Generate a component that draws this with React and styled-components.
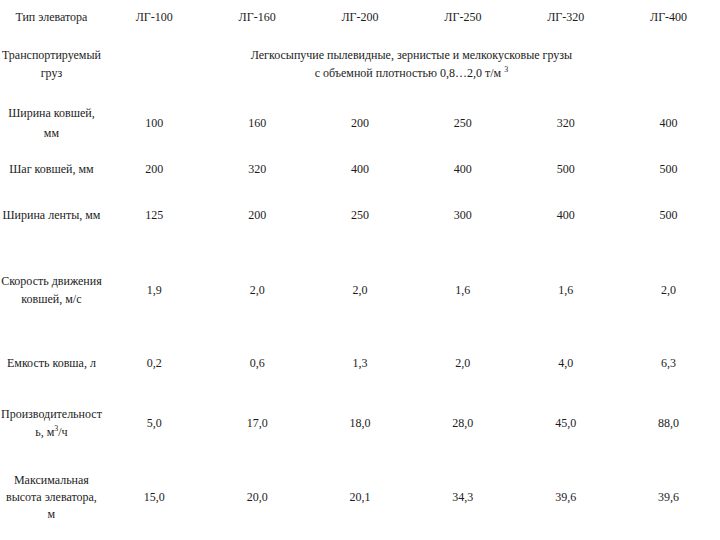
import React from "react";
import styled, { createGlobalStyle } from "styled-components";

const Global = createGlobalStyle`
  html, body { margin: 0; padding: 0; background: #ffffff; }
  body { font-family: "Liberation Serif", "Times New Roman", serif; color: #1c1c1c; }
`;

const Grid = styled.div`
  width: 720px;
  display: grid;
  grid-template-columns: repeat(7, minmax(0, 1fr));
  grid-template-rows: 34px 60px 58px 34px 58px 92px 54px 66px 82px;
  font-size: 12px;
  line-height: 17px;
`;

const Cell = styled.div`
  display: flex;
  align-items: center;
  justify-content: center;
  text-align: center;
  grid-column: ${(p) => (p.$span ? `span ${p.$span}` : "auto")};
  padding: 0 1px;
`;

const Text = styled.span`
  display: block;
  white-space: nowrap;
  line-height: ${(p) => p.$lh || 17}px;
`;

const Sup = styled.sup`
  font-size: 8px;
  line-height: 0;
`;

const headers = ["ЛГ-100", "ЛГ-160", "ЛГ-200", "ЛГ-250", "ЛГ-320", "ЛГ-400"];

const rows = [
  { label: <>Ширина ковшей,<br />мм</>, lh: 20, vals: ["100", "160", "200", "250", "320", "400"] },
  { label: "Шаг ковшей, мм", vals: ["200", "320", "400", "400", "500", "500"] },
  { label: "Ширина ленты, мм", vals: ["125", "200", "250", "300", "400", "500"] },
  { label: <>Скорость движения<br />ковшей, м/с</>, lh: 18, vals: ["1,9", "2,0", "2,0", "1,6", "1,6", "2,0"] },
  { label: "Емкость ковша, л", vals: ["0,2", "0,6", "1,3", "2,0", "4,0", "6,3"] },
  { label: <>Производительност<br />ь, м<Sup>3</Sup>/ч</>, lh: 18, vals: ["5,0", "17,0", "18,0", "28,0", "45,0", "88,0"] },
  { label: <>Максимальная<br />высота элеватора,<br />м</>, lh: 17, vals: ["15,0", "20,0", "20,1", "34,3", "39,6", "39,6"] },
];

export default function App() {
  return (
    <>
      <Global />
      <Grid>
        <Cell><Text>Тип элеватора</Text></Cell>
        {headers.map((h) => (
          <Cell key={h}><Text>{h}</Text></Cell>
        ))}
        <Cell><Text $lh={18}>Транспортируемый<br />груз</Text></Cell>
        <Cell $span={6}>
          <Text $lh={18}>
            Легкосыпучие пылевидные, зернистые и мелкокусковые грузы<br />
            с объемной плотностью 0,8…2,0 т/м <Sup>3</Sup>
          </Text>
        </Cell>
        {rows.map((r, i) => (
          <React.Fragment key={i}>
            <Cell><Text $lh={r.lh}>{r.label}</Text></Cell>
            {r.vals.map((v, j) => (
              <Cell key={j}><Text>{v}</Text></Cell>
            ))}
          </React.Fragment>
        ))}
      </Grid>
    </>
  );
}
